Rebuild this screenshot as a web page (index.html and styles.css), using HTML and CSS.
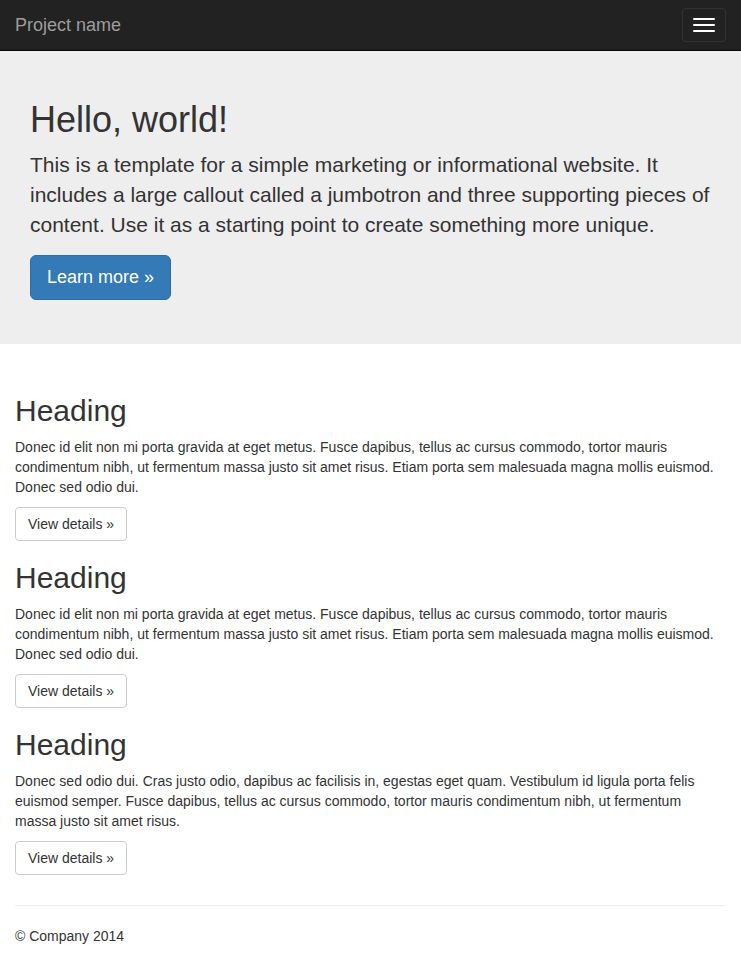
FILE: index.html
```html
<!DOCTYPE html>
<html lang="en">
<head>
<meta charset="utf-8">
<title>Jumbotron Template</title>
<link rel="stylesheet" href="styles.css">
</head>
<body>
<nav class="navbar">
  <div class="navbar-header">
    <a class="navbar-brand" href="#">Project name</a>
    <button type="button" class="navbar-toggle" aria-label="Toggle navigation">
      <span class="icon-bar"></span>
      <span class="icon-bar"></span>
      <span class="icon-bar"></span>
    </button>
  </div>
</nav>

<div class="jumbotron">
  <div class="container">
    <h1>Hello, world!</h1>
    <p>This is a template for a simple marketing or informational website. It includes a large callout called a jumbotron and three supporting pieces of content. Use it as a starting point to create something more unique.</p>
    <p class="actions"><a class="btn btn-primary btn-lg" href="#">Learn more &raquo;</a></p>
  </div>
</div>

<div class="container">
  <div class="row">
    <div class="col">
      <h2>Heading</h2>
      <p>Donec id elit non mi porta gravida at eget metus. Fusce dapibus, tellus ac cursus commodo, tortor mauris condimentum nibh, ut fermentum massa justo sit amet risus. Etiam porta sem malesuada magna mollis euismod. Donec sed odio dui.</p>
      <p><a class="btn btn-default" href="#">View details &raquo;</a></p>
    </div>
    <div class="col">
      <h2>Heading</h2>
      <p>Donec id elit non mi porta gravida at eget metus. Fusce dapibus, tellus ac cursus commodo, tortor mauris condimentum nibh, ut fermentum massa justo sit amet risus. Etiam porta sem malesuada magna mollis euismod. Donec sed odio dui.</p>
      <p><a class="btn btn-default" href="#">View details &raquo;</a></p>
    </div>
    <div class="col">
      <h2>Heading</h2>
      <p>Donec sed odio dui. Cras justo odio, dapibus ac facilisis in, egestas eget quam. Vestibulum id ligula porta felis euismod semper. Fusce dapibus, tellus ac cursus commodo, tortor mauris condimentum nibh, ut fermentum massa justo sit amet risus.</p>
      <p><a class="btn btn-default" href="#">View details &raquo;</a></p>
    </div>
  </div>

  <hr class="divider">

  <footer class="footer">
    <p>&copy; Company 2014</p>
  </footer>
</div>
</body>
</html>
```

FILE: styles.css
```css
html {
  font-size: 10px;
}
body {
  margin: 0;
  padding-top: 50px;
  font-family: "Liberation Sans", Arial, Helvetica, sans-serif;
  font-size: 14px;
  line-height: 1.42857143;
  color: #333;
  background: #fff;
}
p {
  margin: 0 0 10px;
}
a {
  text-decoration: none;
}

.navbar {
  position: fixed;
  top: 0;
  left: 0;
  right: 0;
  z-index: 1030;
  min-height: 50px;
  background-color: #222;
  border-bottom: 1px solid #080808;
}
.navbar-header {
  display: flex;
  justify-content: space-between;
  align-items: flex-start;
  padding: 0 15px;
}
.navbar-brand {
  display: block;
  height: 50px;
  padding: 15px 15px;
  margin-left: -15px;
  box-sizing: border-box;
  font-size: 18px;
  line-height: 20px;
  color: #9d9d9d;
}
.navbar-toggle {
  display: flex;
  flex-direction: column;
  gap: 4px;
  margin: 8px 0 8px 0;
  padding: 9px 10px;
  background: transparent;
  border: 1px solid #333;
  border-radius: 4px;
  cursor: pointer;
}
.icon-bar {
  display: block;
  width: 22px;
  height: 2px;
  border-radius: 1px;
  background-color: #fff;
}

.container {
  padding: 0 15px;
}
.container::before,
.container::after,
.row::before,
.row::after {
  content: " ";
  display: table;
}
.container::after,
.row::after {
  clear: both;
}

.jumbotron {
  padding: 30px 15px;
  margin-bottom: 30px;
  background-color: #eee;
  color: inherit;
}
.jumbotron h1 {
  margin: 20px 0 10px;
  font-size: 36px;
  font-weight: 500;
  line-height: 1.1;
}
.jumbotron p {
  margin-bottom: 15px;
  font-size: 21px;
  font-weight: 200;
}
.jumbotron .actions {
  display: flex;
  margin-bottom: 14px;
}

.row {
  margin: 0 -15px;
}
.col {
  padding: 0 15px;
}
.col h2 {
  margin: 20px 0 10px;
  font-size: 30px;
  font-weight: 500;
  line-height: 1.1;
}

.btn {
  display: inline-block;
  padding: 6px 12px;
  font-size: 14px;
  line-height: 1.42857143;
  text-align: center;
  white-space: nowrap;
  vertical-align: middle;
  border: 1px solid transparent;
  border-radius: 4px;
}
.btn-default {
  color: #333;
  background-color: #fff;
  border-color: #ccc;
}
.btn-primary {
  color: #fff;
  background-color: #337ab7;
  border-color: #2e6da4;
}
.btn-lg {
  padding: 10px 16px;
  font-size: 18px;
  line-height: 23px;
  border-radius: 6px;
}

.divider {
  margin: 20px 0;
  border: 0;
  border-top: 1px solid #eee;
}
.footer p {
  margin: 0 0 10px;
}
```
